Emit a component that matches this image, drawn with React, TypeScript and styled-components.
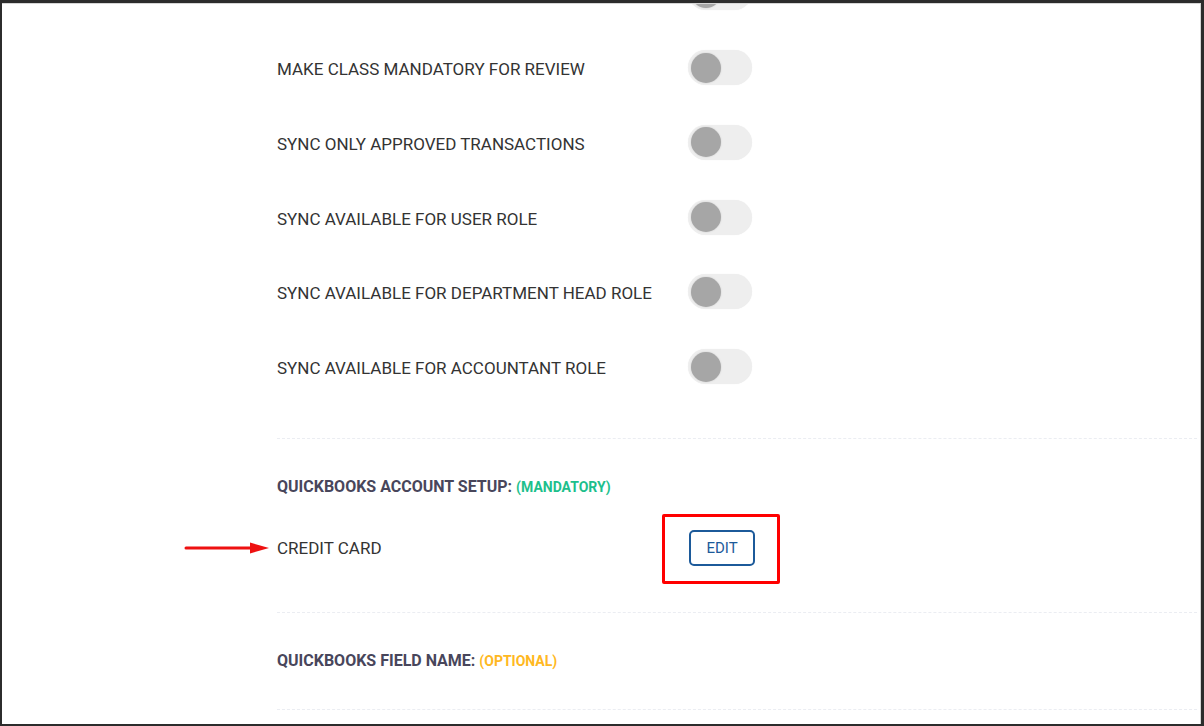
import React from "react";
import styled, { createGlobalStyle } from "styled-components";

const Global = createGlobalStyle`
  html, body { margin: 0; padding: 0; background: #2c2c2c; }
  body { font-family: Roboto, "Noto Sans", Arial, sans-serif; }
  * { box-sizing: border-box; }
`;

const Frame = styled.div`
  width: 1204px;
  height: 726px;
  border-top: 3px solid #2c2c2c;
  border-left: 2px solid #2c2c2c;
  border-right: 3px solid #2c2c2c;
  border-bottom: 2px solid #2c2c2c;
  background: #2c2c2c;
`;

const Page = styled.div`
  height: 100%;
  background: #ffffff;
  border-top: 1px solid #d6d6d6;
  border-right: 1px solid #d6d6d6;
  overflow: hidden;
`;

const Content = styled.div`
  margin-top: -47px;
  padding-left: 275px;
  display: flex;
  flex-direction: column;
`;

const ToggleRow = styled.div`
  height: 74.75px;
  display: grid;
  grid-template-columns: 411px auto;
  align-items: center;
`;

const Label = styled.span`
  font-size: 17px;
  color: #333333;
  text-transform: uppercase;
  letter-spacing: 0;
`;

const Track = styled.span`
  position: relative;
  width: 64px;
  height: 35px;
  margin-bottom: 3px;
  border-radius: 18px;
  background: #eeeeee;
  box-shadow: 0 0 1px rgba(0, 0, 0, 0.08);
  display: flex;
  align-items: center;
  padding-left: 3px;
`;

const Knob = styled.span`
  width: 30px;
  height: 30px;
  border-radius: 50%;
  background: #a6a6a6;
  box-shadow: 0 0 2px rgba(0, 0, 0, 0.15);
`;

const Divider = styled.div<{ $top: number }>`
  margin-top: ${(p) => p.$top}px;
  border-top: 1px dashed #ebedf2;
  margin-right: 3px;
`;

const SectionTitle = styled.div<{ $top: number }>`
  margin-top: ${(p) => p.$top}px;
  height: 20px;
  line-height: 20px;
  font-size: 16px;
  font-weight: 700;
  color: #48465b;
  text-transform: uppercase;
`;

const Tag = styled.span<{ $tone: "success" | "warning" }>`
  font-size: 14px;
  font-weight: 700;
  color: ${(p) => (p.$tone === "success" ? "#1dbf8c" : "#ffb822")};
`;

const FieldRow = styled.div<{ $top: number }>`
  margin-top: ${(p) => p.$top}px;
  height: 36px;
  display: grid;
  grid-template-columns: 411px auto;
  align-items: center;
`;

const LabelWrap = styled.span`
  position: relative;
  display: inline-flex;
  align-items: center;
`;

const ArrowMark = styled.svg`
  position: absolute;
  right: calc(100% + 7px);
  top: 50%;
  transform: translateY(-50%);
`;

const ButtonWrap = styled.span`
  position: relative;
  display: inline-flex;
  justify-self: start;
  margin-left: 1px;
`;

const Highlight = styled.span`
  position: absolute;
  left: -27px;
  right: -25px;
  top: -16px;
  bottom: -18px;
  border: 3px solid #ff0000;
  border-radius: 2px;
  pointer-events: none;
`;

const EditButton = styled.button`
  width: 66px;
  height: 36px;
  border: 2px solid #1c5a9a;
  border-radius: 5px;
  background: #ffffff;
  color: #1c5a9a;
  font-family: Roboto, Arial, sans-serif;
  font-size: 15px;
  font-weight: 400;
  padding: 0;
  cursor: pointer;
`;

const toggles = [
  "",
  "Make class mandatory for review",
  "Sync only approved transactions",
  "Sync available for user role",
  "Sync available for department head role",
  "Sync available for accountant role",
];

export default function App() {
  return (
    <>
      <Global />
      <Frame>
        <Page>
          <Content>
            {toggles.map((t, i) => (
              <ToggleRow key={i}>
                <Label>{t}</Label>
                <Track>
                  <Knob />
                </Track>
              </ToggleRow>
            ))}
            <Divider $top={32} />
            <SectionTitle $top={38}>
              QuickBooks Account Setup: <Tag $tone="success">(Mandatory)</Tag>
            </SectionTitle>
            <FieldRow $top={33}>
              <LabelWrap>
                <ArrowMark width="86" height="14" viewBox="0 0 86 14">
                  <line x1="2" y1="7" x2="70" y2="7" stroke="#ee1111" strokeWidth="3" strokeLinecap="round" />
                  <polygon points="66,1.5 85,7 66,12.5" fill="#ee1111" />
                </ArrowMark>
                <Label>Credit Card</Label>
              </LabelWrap>
              <ButtonWrap>
                <EditButton>EDIT</EditButton>
                <Highlight />
              </ButtonWrap>
            </FieldRow>
            <Divider $top={46} />
            <SectionTitle $top={38}>
              QuickBooks Field Name: <Tag $tone="warning">(Optional)</Tag>
            </SectionTitle>
            <Divider $top={38} />
          </Content>
        </Page>
      </Frame>
    </>
  );
}
